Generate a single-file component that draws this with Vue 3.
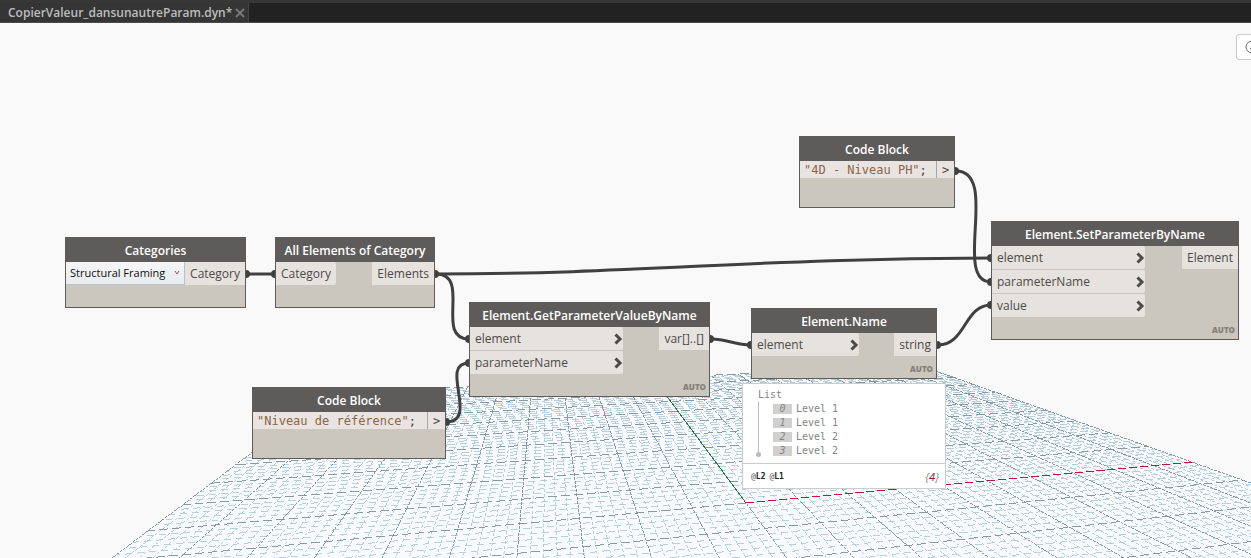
<script setup>
import { ref } from 'vue'

const category = ref('Structural Framing')

const nodes = [
  { id: 'categories', title: 'Categories', x: 65, y: 214, w: 181, select: true, inputs: [], out: 'Category', foot: 'plain' },
  { id: 'all-elements', title: 'All Elements of Category', x: 275, y: 214, w: 160, inputs: ['Category'], inW: 60, out: 'Elements', foot: 'plain' },
  { id: 'get-parameter', title: 'Element.GetParameterValueByName', x: 469, y: 279, w: 241, inputs: ['element', 'parameterName'], inW: 153, levels: true, out: 'var[]..[]', foot: 'auto' },
  { id: 'code-reference', title: 'Code Block', x: 252, y: 364, w: 194, inputs: [], code: '"Niveau de référence"', foot: 'code' },
  { id: 'element-name', title: 'Element.Name', x: 751, y: 285, w: 186, inputs: ['element'], inW: 107, levels: true, out: 'string', foot: 'auto' },
  { id: 'code-level', title: 'Code Block', x: 799, y: 113, w: 156, inputs: [], code: '"4D - Niveau PH"', foot: 'code' },
  { id: 'set-parameter', title: 'Element.SetParameterByName', x: 991, y: 198, w: 248, inputs: ['element', 'parameterName', 'value'], inW: 153, levels: true, out: 'Element', foot: 'auto' },
]

const wires = [
  'M247 251H275',
  'M436 251C640 251 760 235 991 235',
  'M436 251C472 251 434 316 469 316',
  'M446 399C480 399 438 340 469 340',
  'M711 316C728 316 734 322 751 322',
  'M938 322C966 322 964 282 991 282',
  'M956 148C1000 148 952 259 991 259',
]
const ends = [
  [246, 251], [275, 251], [435, 251], [991, 235], [469, 316], [446, 399], [469, 340],
  [710, 316], [751, 322], [937, 322], [991, 282], [955, 148], [991, 259],
]

const levels = ['Level 1', 'Level 1', 'Level 2', 'Level 2']

// Ground plane coordinates (-1..1 on both axes) projected to canvas pixels.
function project(u, v) {
  const d = 1 + 0.178 * u + 0.856 * v
  return [
    ((746 + 658 * u + 466.5 * v) / d).toFixed(2),
    ((480 + 37.2 * u + 178.9 * v) / d).toFixed(2),
  ].join(' ')
}
const near = -0.76
const grid = { minorRows: [], minorColumns: '', majorRows: [], majorColumns: '' }
for (let i = -50; i <= 50; i++) {
  const t = i / 50
  const kind = i % 5 === 0 ? 'major' : 'minor'
  grid[kind + 'Columns'] += `M${project(t, near)}L${project(t, i === 0 ? 0 : 1)}`
  if (t >= near) {
    grid[kind + 'Rows'].push({ d: `M${project(-1, t)}L${project(i === 0 ? 0 : 1, t)}`, shift: (i + 50) * 5 })
  }
}
const plane = `M${project(-1, near)}L${project(-1, 1)}L${project(1, 1)}L${project(1, near)}Z`
const xAxis = `M${project(0, 0)}L${project(1, 0)}`
const yAxis = `M${project(0, 0)}L${project(0, 1)}`
</script>

<template>
  <div class="app">
    <header class="tabs">
      <div class="tab">
        <span>CopierValeur_dansunautreParam.dyn*</span>
        <button class="close" aria-label="Close tab">
          <svg width="10" height="10" viewBox="0 0 10 10"><path d="M1 1L9 9M9 1L1 9" /></svg>
        </button>
      </div>
    </header>

    <main class="canvas">
      <svg class="scene" aria-hidden="true">
        <path class="plane" :d="plane" />
        <g class="grid">
          <path class="minor column" :d="grid.minorColumns" />
          <path v-for="r in grid.minorRows" :key="r.d" class="minor row" :d="r.d" :stroke-dashoffset="r.shift" />
          <path class="major column" :d="grid.majorColumns" />
          <path v-for="r in grid.majorRows" :key="r.d" class="major row" :d="r.d" :stroke-dashoffset="r.shift" />
          <path class="y-axis" :d="yAxis" />
          <path class="x-axis" :d="xAxis" />
        </g>
        <g class="wires">
          <path v-for="w in wires" :key="w" :d="w" />
          <circle v-for="(p, i) in ends" :key="i" :cx="p[0]" :cy="p[1]" r="4" />
        </g>
      </svg>

      <section v-for="n in nodes" :key="n.id" class="node" :style="{ left: n.x + 'px', top: n.y + 'px', width: n.w + 'px' }">
        <h2>{{ n.title }}</h2>
        <div v-if="n.code" class="code-row">
          <code><span>{{ n.code }}</span>;</code>
          <span class="code-out">&gt;</span>
        </div>
        <div v-else class="ports">
          <div v-if="n.select" class="picker">
            <select v-model="category" aria-label="Category">
              <option>Structural Framing</option>
            </select>
            <svg width="6" height="5" viewBox="0 0 6 5"><path d="M1 1L3 4L5 1" /></svg>
          </div>
          <ul v-else class="inputs" :style="{ width: n.inW + 'px' }">
            <li v-for="p in n.inputs" :key="p">
              <span>{{ p }}</span>
              <svg v-if="n.levels" width="9" height="12" viewBox="0 0 9 12"><path d="M1.5 1.5L6 6L1.5 10.5" /></svg>
            </li>
          </ul>
          <div class="output">{{ n.out }}</div>
        </div>
        <footer :class="n.foot"><span v-if="n.foot === 'auto'">AUTO</span></footer>
      </section>

      <aside class="preview">
        <div class="result">
          <div class="root">List</div>
          <ol>
            <li v-for="(l, i) in levels" :key="i"><i>{{ i }}</i><span>{{ l }}</span></li>
          </ol>
        </div>
        <div class="summary">
          <div class="tags"><span>@<b>L2</b></span><span>@<b>L1</b></span></div>
          <div class="count">{<em>4</em>}</div>
        </div>
      </aside>

      <button class="zoom" aria-label="Zoom to fit">
        <svg width="14" height="14" viewBox="0 0 14 14"><circle cx="7" cy="7" r="6" /><path d="M5 8.5H8M7 5V9" /></svg>
      </button>
    </main>
  </div>
</template>

<style>
body { background: #f9f9f9; }
</style>

<style scoped>
.app { display: flex; flex-direction: column; height: 100vh; font-family: "Open Sans", sans-serif; font-size: 12px; }
.tabs { display: flex; height: 23px; box-sizing: border-box; background: #222; border-top: 3px solid #373737; border-bottom: 1px solid #4a4a4a; }
.tab { display: flex; align-items: center; gap: 3px; padding: 0 3px 0 8px; background: #353535; color: #bdbdbd; font-weight: 600; border-right: 1px solid #454545; line-height: 20px; }
.close { display: flex; padding: 0; border: 0; background: none; }
.close path { stroke: #777; stroke-width: 2; }
.canvas { position: relative; flex: 1; overflow: hidden; background: #f9f9f9; }
.scene { position: absolute; inset: 0; width: 100%; height: 100%; }
.scene path { fill: none; }
.scene .plane { fill: #f7fbfe; }
.grid { shape-rendering: crispEdges; }
.minor { stroke: #a9c4d4; stroke-width: 0.8; }
.major { stroke: #7c8e9c; stroke-width: 0.9; }
.minor.row { stroke-dasharray: 7 5; }
.major.row { stroke-dasharray: 9 4; }
.minor.column { stroke-dasharray: 3 2; }
.major.column { stroke-dasharray: 3 1; }
.y-axis { stroke: #217a35; stroke-width: 1; }
.x-axis { stroke: #c01535; stroke-width: 1; stroke-dasharray: 8 3; }
.wires path { stroke: #404040; stroke-width: 3; }
.wires circle { fill: #404040; }

.node { position: absolute; box-sizing: border-box; background: #cbc6be; border: 1px solid #5e5c5a; color: #4d4a48; }
.node h2 { margin: 0; height: 24px; line-height: 25px; background: #5e5c5a; color: #fff; font-size: 12px; font-weight: 600; text-align: center; white-space: nowrap; }
.ports { display: flex; align-items: flex-start; justify-content: space-between; }
.inputs { margin: 0; padding: 0; list-style: none; }
.inputs li { display: flex; align-items: center; justify-content: space-between; height: 23px; line-height: 23px; padding: 0 0 0 5px; background: #e6e2de; border-radius: 0 2px 2px 0; }
.inputs li + li { box-sizing: border-box; height: 24px; border-top: 1px solid #cbc6be; }
.inputs path { fill: none; stroke: #4d4a48; stroke-width: 3; }
.output { height: 23px; line-height: 23px; padding: 0 5px; background: #e6e2de; }
.picker { position: relative; display: flex; flex: 1; }
.picker select { appearance: none; width: 100%; height: 23px; padding: 0 4px 2px; border: 1px solid #b4c3cf; border-left: 0; border-top: 0; border-radius: 0; background: linear-gradient(#f4f5f6, #e9ecee); color: #111; font: 11px "Open Sans", sans-serif; }
.picker svg { position: absolute; right: 5px; top: 8px; }
.picker path { fill: none; stroke: #666; }
.node footer { display: flex; align-items: flex-end; justify-content: flex-end; height: 22px; color: #858078; font-size: 8px; font-weight: 800; line-height: 14px; }
.node footer.auto { height: 20px; padding: 0 3px 2px; }
.node footer.code { height: 29px; }
.code-row { display: flex; justify-content: space-between; height: 17px; line-height: 18px; background: #e9e4e1; font-family: "DejaVu Sans Mono", monospace; }
.code-row code { padding-left: 4px; font: inherit; color: #444; }
.code-row code span { color: #8a6546; }
.code-out { width: 17px; border-left: 1px solid #aaa6a0; text-align: center; }

.preview { position: absolute; left: 742px; top: 360px; width: 204px; box-sizing: border-box; border: 1px solid #c8cdd0; background: #fff; font-family: "DejaVu Sans Mono", monospace; font-size: 10px; color: #858585; }
.result { position: relative; padding: 4px 15px 5px; line-height: 14px; }
.result::before { content: ""; position: absolute; left: 15px; top: 18px; width: 1px; height: 50px; background: #bbb; }
.result::after { content: ""; position: absolute; left: 13px; top: 68px; width: 5px; height: 5px; border-radius: 50%; background: #bbb; }
.result ol { margin: 0; padding: 0 0 0 15px; list-style: none; }
.result li { display: flex; align-items: center; gap: 4px; height: 14px; }
.result i { width: 19px; height: 10px; line-height: 10px; background: #d0d0d0; text-align: center; }
.summary { display: flex; align-items: center; justify-content: space-between; height: 24px; padding: 0 6px 0 8px; border-top: 1px solid #ccc; }
.tags { display: flex; gap: 4px; font-size: 8px; color: #555; }
.tags b { color: #222; }
.count { font-family: "Open Sans", sans-serif; font-size: 11px; font-style: italic; }
.count em { color: #8b1c2b; }
.zoom { position: absolute; right: -16px; top: 11px; width: 31px; height: 26px; display: flex; align-items: center; justify-content: center; padding: 0; background: #fff; border: 1px solid #ccc; border-radius: 3px; }
.zoom svg { fill: none; stroke: #666; }
</style>
